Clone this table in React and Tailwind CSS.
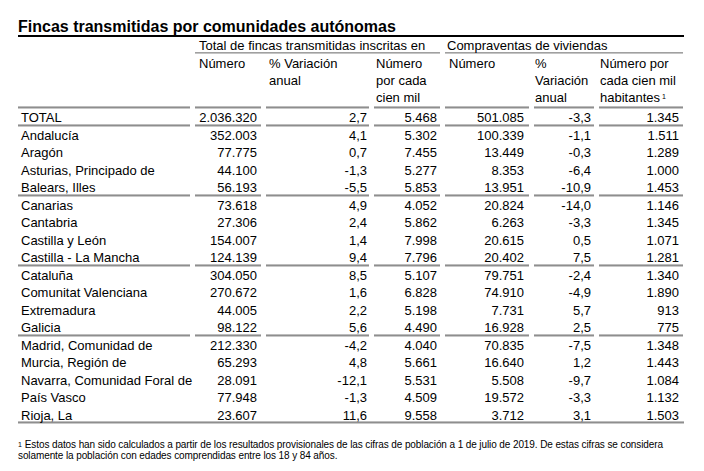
import React from "react";

const rows = [
  ["TOTAL", "2.036.320", "2,7", "5.468", "501.085", "-3,3", "1.345", true],
  ["Andalucía", "352.003", "4,1", "5.302", "100.339", "-1,1", "1.511"],
  ["Aragón", "77.775", "0,7", "7.455", "13.449", "-0,3", "1.289"],
  ["Asturias, Principado de", "44.100", "-1,3", "5.277", "8.353", "-6,4", "1.000"],
  ["Balears, Illes", "56.193", "-5,5", "5.853", "13.951", "-10,9", "1.453", true],
  ["Canarias", "73.618", "4,9", "4.052", "20.824", "-14,0", "1.146"],
  ["Cantabria", "27.306", "2,4", "5.862", "6.263", "-3,3", "1.345"],
  ["Castilla y León", "154.007", "1,4", "7.998", "20.615", "0,5", "1.071"],
  ["Castilla - La Mancha", "124.139", "9,4", "7.796", "20.402", "7,5", "1.281", true],
  ["Cataluña", "304.050", "8,5", "5.107", "79.751", "-2,4", "1.340"],
  ["Comunitat Valenciana", "270.672", "1,6", "6.828", "74.910", "-4,9", "1.890"],
  ["Extremadura", "44.005", "2,2", "5.198", "7.731", "5,7", "913"],
  ["Galicia", "98.122", "5,6", "4.490", "16.928", "2,5", "775", true],
  ["Madrid, Comunidad de", "212.330", "-4,2", "4.040", "70.835", "-7,5", "1.348"],
  ["Murcia, Región de", "65.293", "4,8", "5.661", "16.640", "1,2", "1.443"],
  ["Navarra, Comunidad Foral de", "28.091", "-12,1", "5.531", "5.508", "-9,7", "1.084"],
  ["País Vasco", "77.948", "-1,3", "4.509", "19.572", "-3,3", "1.132"],
  ["Rioja, La", "23.607", "11,6", "9.558", "3.712", "3,1", "1.503"],
];

const grid = "grid grid-cols-[172px_66px_103px_66px_84px_60px_84px] gap-x-[5px]";
const sep = "shadow-[inset_0_-1px_0_#c8c8c8,inset_0_-2px_0_#8e8e8e,inset_0_-3px_0_#bdbdbd]";
const padR = ["pl-[3px]", "pr-[4px]", "pr-[2px]", "pr-[3px]", "pr-[5px]", "pr-[3px]", "pr-[4px]"];

export default function App() {
  return (
    <div className="bg-white w-[704px] h-[471px] text-black font-['Liberation_Sans',Arial,sans-serif]">
      <div className="pl-[18px] w-[684px]">
        <div className="pt-[19px] border-b-2 border-black">
          <div className="text-[16px] font-bold leading-[16px]">
            Fincas transmitidas por comunidades autónomas
          </div>
        </div>
        <div className={`${grid} h-[17px] text-[13px] leading-[15px] pt-[0.5px]`}>
          <div></div>
          <div className="col-span-3 pl-[4px] shadow-[inset_0_-1px_0_#c4c4c4,inset_0_-2px_0_#a0a0a0]">
            Total de fincas transmitidas inscritas en
          </div>
          <div className="col-span-3 pl-[2px] shadow-[inset_0_-1px_0_#c4c4c4,inset_0_-2px_0_#a0a0a0]">
            Compraventas de viviendas
          </div>
        </div>
        <div className={`${grid} h-[55px] text-[13px] leading-[17px] pt-[1px]`}>
          <div className={sep}></div>
          <div className={`${sep} pl-[4px]`}>Número</div>
          <div className={`${sep} pl-[3px]`}>% Variación<br />anual</div>
          <div className={`${sep} pl-[2px]`}>Número<br />por cada<br />cien mil</div>
          <div className={`${sep} pl-[4px]`}>Número</div>
          <div className={`${sep} pl-[1px]`}>%<br />Variación<br />anual</div>
          <div className={`${sep} pl-[1px]`}>
            Número por<br />cada cien mil<br />habitantes
            <sup className="text-[7px] relative top-[-3px] ml-[2px]">1</sup>
          </div>
        </div>
        {rows.map((r, i) => {
          const last = i === rows.length - 1;
          return (
            <div
              key={i}
              className={`${grid} h-[17.5px] text-[13px] leading-[17.5px] ${last ? sep : ""}`}
            >
              {r.slice(0, 7).map((c, j) => (
                <div
                  key={j}
                  className={`${padR[j]} whitespace-nowrap ${j === 0 ? "text-left" : "text-right"} ${r[7] ? sep : ""}`}
                >
                  {c}
                </div>
              ))}
            </div>
          );
        })}
        <div className="mt-[15px] text-[10px] leading-[11px] font-['Liberation_Sans_Narrow','Liberation_Sans',Arial,sans-serif] tracking-[-0.1px] w-[680px]">
          <sup className="text-[7px] relative top-[-1px] mr-[3px]">1</sup>
          Estos datos han sido calculados a partir de los resultados provisionales de las cifras de población a 1 de julio de 2019. De estas cifras se considera solamente la población con edades comprendidas entre los 18 y 84 años.
        </div>
      </div>
    </div>
  );
}
